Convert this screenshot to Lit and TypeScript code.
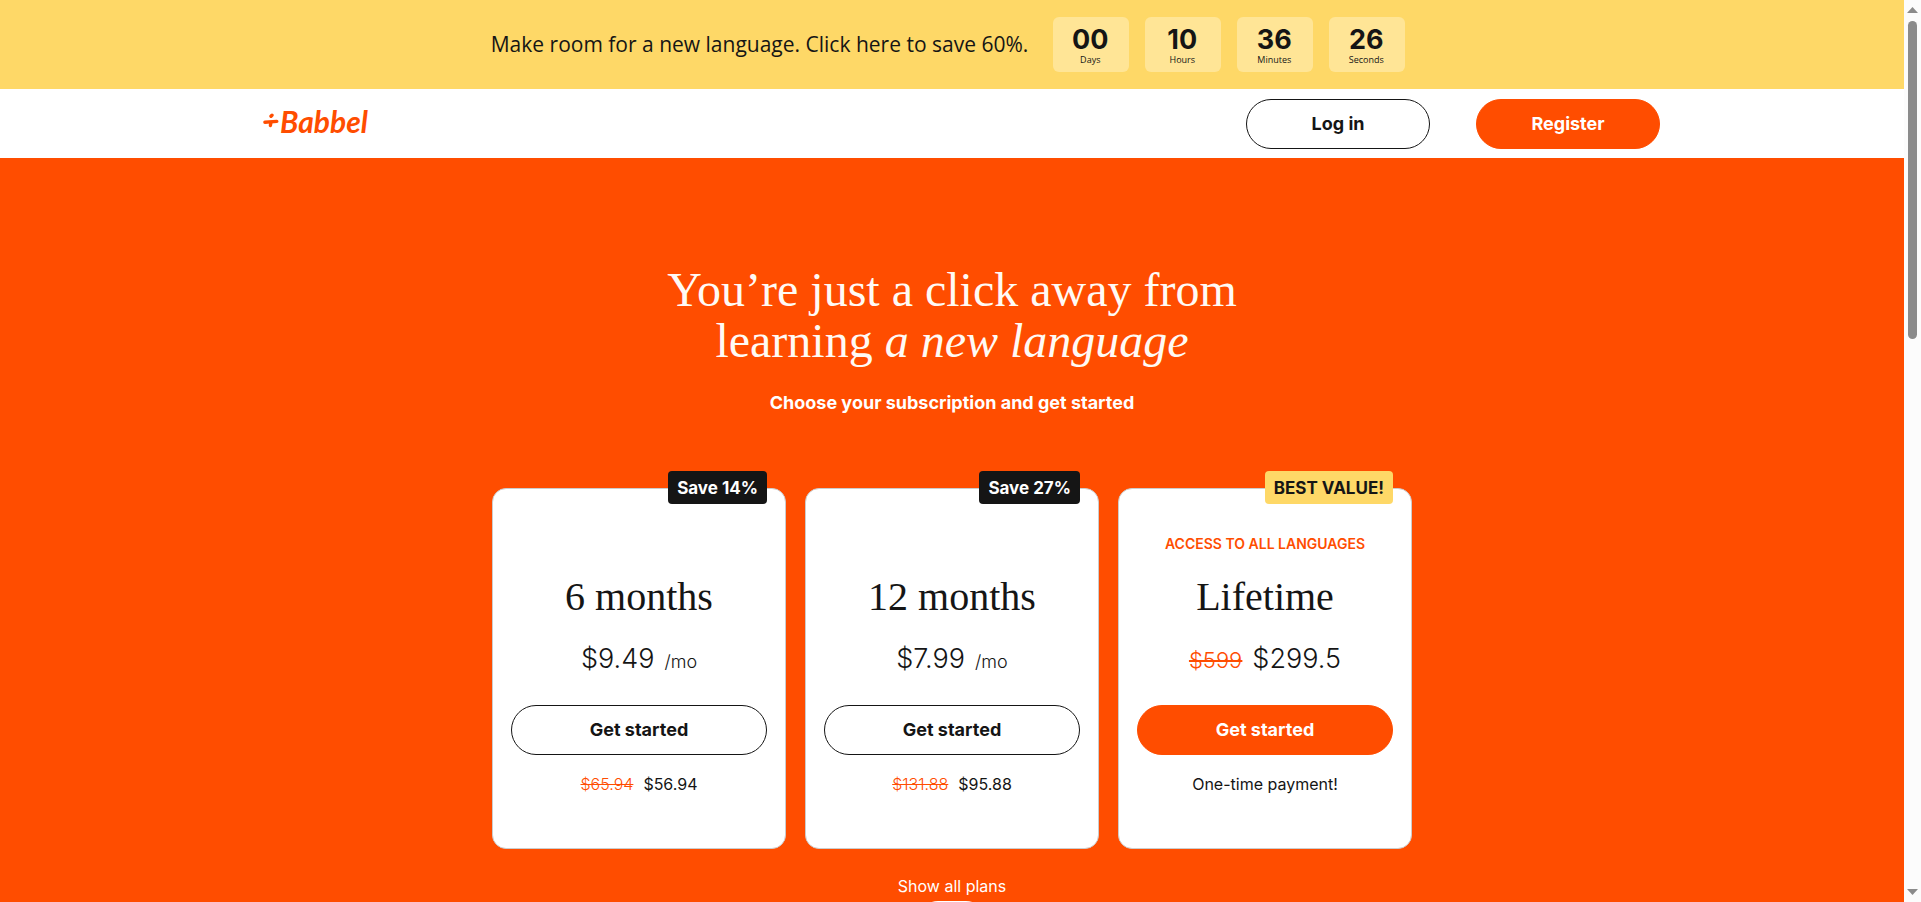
import { LitElement, html, css, svg, nothing } from "lit";
import { customElement, property, state } from "lit/decorators.js";
import { classMap } from "lit/directives/class-map.js";

interface Plan {
  title: string;
  tag: string;
  note?: string;
  price: string;
  unit?: string;
  oldPrice?: string;
  total?: string;
  oldTotal?: string;
  footnote?: string;
  featured?: boolean;
}

const PLANS: Plan[] = [
  { title: "6 months", tag: "Save 14%", price: "$9.49", unit: "/mo", oldTotal: "$65.94", total: "$56.94" },
  { title: "12 months", tag: "Save 27%", price: "$7.99", unit: "/mo", oldTotal: "$131.88", total: "$95.88" },
  {
    title: "Lifetime",
    tag: "BEST VALUE!",
    note: "ACCESS TO ALL LANGUAGES",
    oldPrice: "$599",
    price: "$299.5",
    footnote: "One-time payment!",
    featured: true,
  },
];

const COUNTDOWN: [string, string][] = [
  ["00", "Days"],
  ["10", "Hours"],
  ["36", "Minutes"],
  ["26", "Seconds"],
];

const pill = css`
  .pill {
    box-sizing: border-box;
    height: 50px;
    border: 1px solid #151515;
    border-radius: 25px;
    background: #fff;
    color: #151515;
    font: 700 18px/24px Inter, sans-serif;
    padding: 0 16px;
    cursor: pointer;
  }
  .pill.solid {
    border-color: #ff4d00;
    background: #ff4d00;
    color: #fff;
  }
`;

@customElement("promo-banner")
export class PromoBanner extends LitElement {
  static styles = css`
    :host {
      display: block;
    }
    .banner {
      display: flex;
      justify-content: center;
      align-items: center;
      gap: 25px;
      padding: 17px 8px 17px 0;
      background: #fed867;
      color: #151515;
      text-decoration: none;
    }
    .message {
      padding-bottom: 2px;
      font: 400 21px/32px "Open Sans", sans-serif;
    }
    .timer {
      display: flex;
      gap: 16px;
    }
    .cell {
      display: flex;
      flex-direction: column;
      align-items: center;
      box-sizing: border-box;
      width: 76px;
      height: 55px;
      padding: 8px 2px 0 0;
      border-radius: 6px;
      background: #ffe596;
    }
    .value {
      font: 700 27px/30px Inter, sans-serif;
    }
    .label {
      font: 400 9px/9px "Open Sans", sans-serif;
    }
  `;
  render() {
    return html`<a class="banner" href="#plans">
      <span class="message">Make room for a new language. Click here to save 60%.</span>
      <span class="timer">
        ${COUNTDOWN.map(
          ([value, label]) => html`<span class="cell"><span class="value">${value}</span><span class="label">${label}</span></span>`
        )}
      </span>
    </a>`;
  }
}

@customElement("site-header")
export class SiteHeader extends LitElement {
  static styles = [
    pill,
    css`
      :host {
        display: block;
      }
      .bar {
        display: flex;
        justify-content: space-between;
        align-items: flex-start;
        max-width: 1416px;
        margin: 0 auto;
        padding: 10px 16px 9px;
      }
      .logo {
        display: flex;
        align-items: center;
        gap: 1px;
        margin: 4px 0 0 19px;
        color: #ff4d00;
        font: italic 700 30px/36px Lato, sans-serif;
        text-decoration: none;
      }
      .mark {
        width: 16px;
        height: 16px;
        display: block;
      }
      .actions {
        display: flex;
        gap: 46px;
      }
      .actions .pill {
        width: 184px;
      }
      @media (min-width: 1480px) {
        .bar {
          padding-left: 0;
          padding-right: 0;
        }
      }
    `,
  ];
  render() {
    return html`<header class="bar">
      <a class="logo" href="#" aria-label="Babbel">
        <svg class="mark" viewBox="0 0 16 16" fill="none" stroke="#ff4d00" stroke-linecap="round" aria-hidden="true">
          <path d="M1.9 9.2L13.8 8.4" stroke-width="3.4" />
          <path d="M8 3.2L9 2.2" stroke-width="3.4" />
          <path d="M7.4 12.6L7.8 10" stroke-width="3.4" />
        </svg>
        <span>Babbel</span>
      </a>
      <nav class="actions" aria-label="Account">
        <button class="pill" type="button">Log in</button>
        <button class="pill solid" type="button">Register</button>
      </nav>
    </header>`;
  }
}

@customElement("plan-card")
export class PlanCard extends LitElement {
  @property({ attribute: false }) plan!: Plan;

  static styles = [
    pill,
    css`
      :host {
        display: block;
      }
      .card {
        position: relative;
        box-sizing: border-box;
        height: 100%;
        padding: 45px 18px 52px;
        border: 1px solid #ccc;
        border-radius: 14px;
        background: #fff;
        color: #151515;
        text-align: center;
        font-family: Inter, sans-serif;
      }
      .tag {
        position: absolute;
        top: -18px;
        right: 18px;
        padding: 1px 9px 0;
        border-radius: 4px;
        background: #151515;
        color: #fff;
        font-weight: 700;
        font-size: 17px;
        line-height: 32px;
      }
      .featured .tag {
        background: #fed867;
        color: #151515;
      }
      .note {
        min-height: 20px;
        color: #ff4d00;
        font-weight: 600;
        font-size: 14px;
        line-height: 20px;
      }
      .title {
        margin: 19px 0 18px;
        font: 400 40px/48px "Liberation Serif", serif;
      }
      .price {
        display: flex;
        justify-content: center;
        align-items: baseline;
        gap: 10px;
        height: 40px;
        margin-bottom: 26px;
        font-weight: 300;
        font-size: 27px;
        line-height: 40px;
      }
      .unit {
        font-size: 18px;
      }
      .old {
        color: #ff4d00;
      }
      .price .old {
        font-size: 22px;
      }
      .pill {
        display: block;
        width: 100%;
      }
      .total {
        display: flex;
        justify-content: center;
        gap: 10px;
        margin-top: 17px;
        font-weight: 400;
        font-size: 16px;
        line-height: 24px;
      }
      .total .old {
        font-weight: 300;
      }
    `,
  ];
  render() {
    const p = this.plan;
    return html`<article class=${classMap({ card: true, featured: !!p.featured })}>
      <div class="tag">${p.tag}</div>
      <div class="note">${p.note ?? nothing}</div>
      <h2 class="title">${p.title}</h2>
      <div class="price">
        ${p.oldPrice ? html`<s class="old">${p.oldPrice}</s>` : nothing}
        <span>${p.price}</span>
        ${p.unit ? html`<span class="unit">${p.unit}</span>` : nothing}
      </div>
      <button class=${classMap({ pill: true, solid: !!p.featured })} type="button">Get started</button>
      <div class="total">
        ${p.oldTotal ? html`<s class="old">${p.oldTotal}</s>` : nothing}
        <span>${p.total ?? p.footnote}</span>
      </div>
    </article>`;
  }
}

@customElement("app-root")
export class AppRoot extends LitElement {
  @state() private plans = PLANS;

  static styles = css`
    :host {
      display: flex;
      height: 100vh;
      overflow: hidden;
      background: #ff4d00;
    }
    .page {
      flex: 1;
      min-width: 0;
      overflow: hidden;
    }
    .top {
      background: #fff;
    }
    .hero {
      padding: 106px 16px 40px;
      background: #ff4d00;
      text-align: center;
      font-family: Inter, sans-serif;
      color: #fff;
    }
    .headline {
      margin: 0 0 25px;
      color: #fffaf5;
      font: 400 48px/51px "Liberation Serif", serif;
    }
    .row {
      display: block;
    }
    .sub {
      margin: 0 0 73px;
      font-weight: 700;
      font-size: 18px;
      line-height: 24px;
    }
    .plans {
      display: grid;
      grid-template-columns: repeat(auto-fit, minmax(256px, 1fr));
      gap: 19px;
      max-width: 920px;
      margin: 0 auto 25px;
    }
    .more {
      display: flex;
      flex-direction: column;
      align-items: center;
      gap: 3px;
      margin: 0 auto;
      padding: 0;
      border: 0;
      background: none;
      color: #fff;
      font: 400 16px/24px Inter, sans-serif;
      cursor: pointer;
    }
    .chevron {
      display: flex;
      justify-content: center;
      align-items: center;
      width: 68px;
      height: 40px;
      border-radius: 20px;
      background: #fff;
    }
    .scroll {
      display: flex;
      flex-direction: column;
      align-items: center;
      flex: 0 0 17px;
      padding: 7px 0;
      box-sizing: border-box;
      background: #fcfcfc;
    }
    .arrow {
      display: block;
      width: 11px;
      height: 6px;
      fill: #8b8b8b;
    }
    .track {
      flex: 1;
      width: 9px;
      margin: 8px 0;
    }
    .thumb {
      height: 37%;
      border-radius: 5px;
      background: #8b8b8b;
    }
  `;

  render() {
    return html`
      <div class="page">
        <div class="top">
          <promo-banner></promo-banner>
          <site-header></site-header>
        </div>
        <main class="hero" id="plans">
          <h1 class="headline">
            <span class="row">You’re just a click away from</span>
            <span class="row">learning <em>a new language</em></span>
          </h1>
          <p class="sub">Choose your subscription and get started</p>
          <section class="plans">${this.plans.map((p) => html`<plan-card .plan=${p}></plan-card>`)}</section>
          <button class="more" type="button">
            <span>Show all plans</span>
            <span class="chevron">
              <svg width="16" height="10" viewBox="0 0 16 10" fill="none" stroke="#ff4d00" stroke-width="2" aria-hidden="true">
                ${svg`<path d="M1 1l7 7 7-7" />`}
              </svg>
            </span>
          </button>
        </main>
      </div>
      <div class="scroll" aria-hidden="true">
        <svg class="arrow" viewBox="0 0 11 6"><path d="M5.5 0L11 6H0z" /></svg>
        <div class="track"><div class="thumb"></div></div>
        <svg class="arrow" viewBox="0 0 11 6"><path d="M0 0H11L5.5 6z" /></svg>
      </div>
    `;
  }
}
